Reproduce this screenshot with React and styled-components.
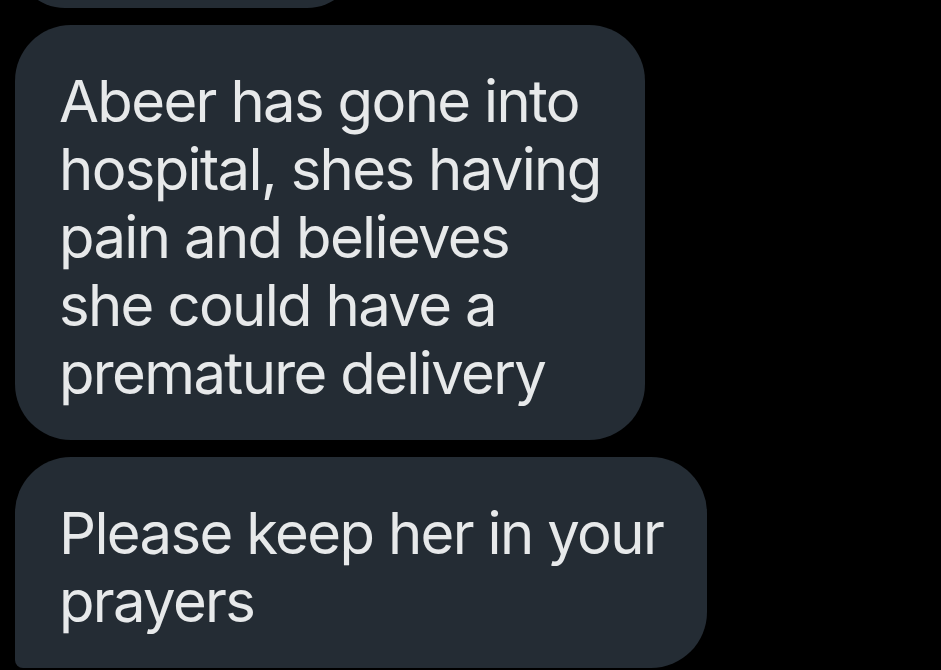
import React from "react";
import styled, { createGlobalStyle } from "styled-components";

const Global = createGlobalStyle`
  html, body { margin: 0; padding: 0; background: #000; }
  body { font-family: Inter, "Noto Sans", sans-serif; }
`;

const Screen = styled.div`
  width: 941px;
  height: 670px;
  background: #000;
  overflow: hidden;
  display: flex;
  flex-direction: column;
  align-items: flex-start;
  gap: 17px;
  padding: 0 0 0 15px;
  box-sizing: border-box;
`;

const Bubble = styled.div`
  flex: none;
  background: #242c34;
  color: #e7e9ea;
  font-family: Inter, "Noto Sans", sans-serif;
  font-size: 58px;
  line-height: 68px;
  letter-spacing: -1.65px;
  white-space: pre-line;
  padding: 42px 44px 33px 44px;
  border-radius: 56px;
  border-bottom-left-radius: ${(p) => (p.$tail ? "8px" : "56px")};
  box-sizing: border-box;
`;

const Cut = styled(Bubble)`
  width: 342px;
  height: 100px;
  margin-top: -92px;
  padding: 0;
`;

export default function App() {
  return (
    <>
      <Global />
      <Screen>
        <Cut />
        <Bubble>{"Abeer has gone into\nhospital, shes having\npain and believes\nshe could have a\npremature delivery"}</Bubble>
        <Bubble $tail>{"Please keep her in your\nprayers"}</Bubble>
      </Screen>
    </>
  );
}
